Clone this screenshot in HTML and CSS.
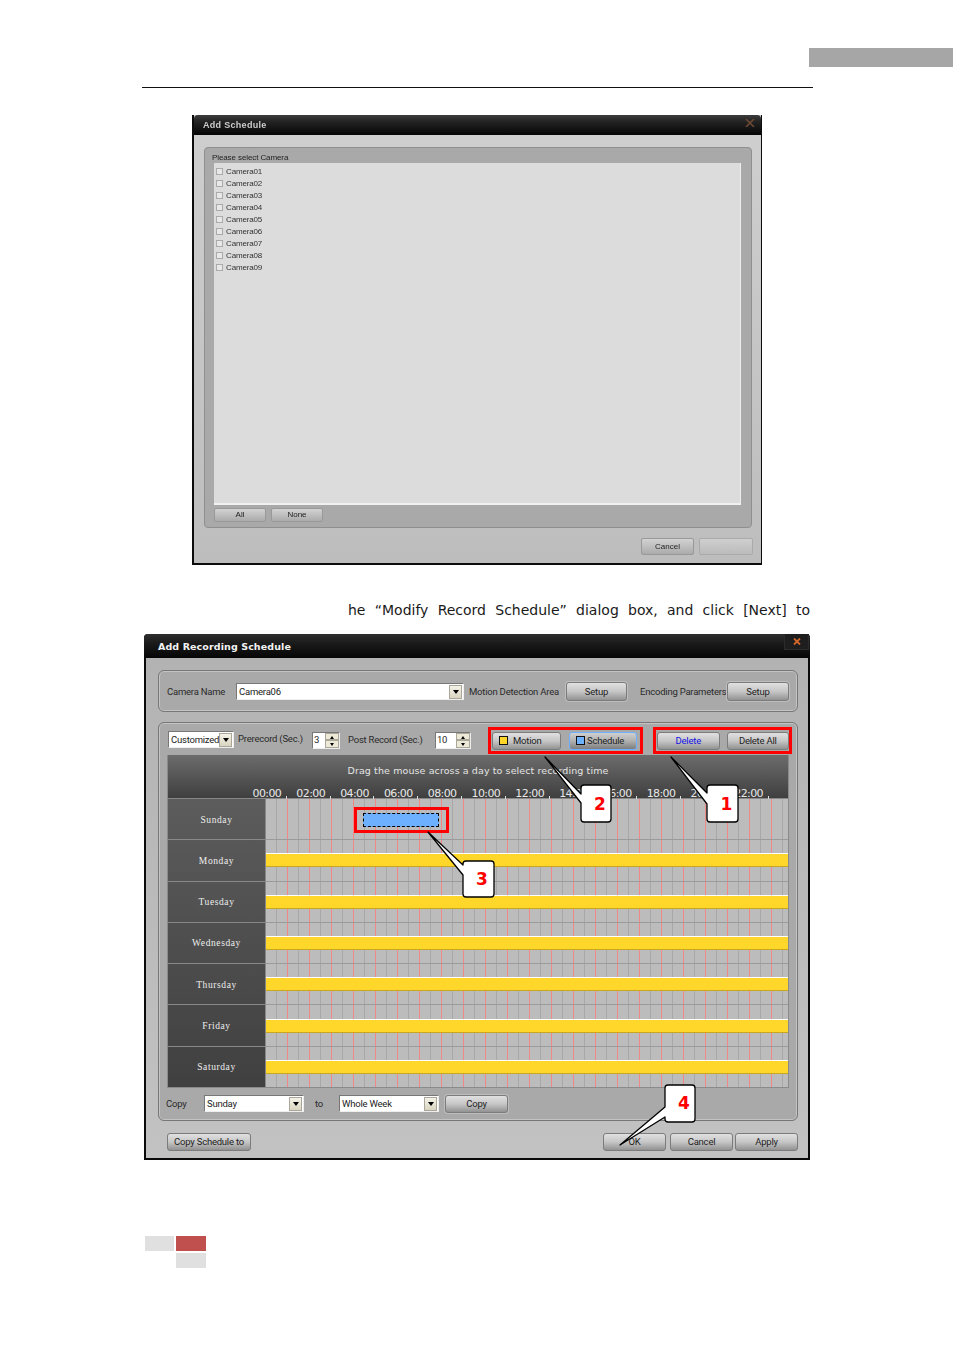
FILE: index.html
```html
<!DOCTYPE html>
<html lang="en">
<head>
<meta charset="utf-8">
<title>Add Recording Schedule</title>
<link rel="stylesheet" href="styles.css">
</head>
<body>
<div class="page">
  <div class="tab-bar"></div>
  <div class="rule"></div>

  <section class="fig1">
    <div class="fig1-title"><span>Add Schedule</span><svg class="fig1-x" viewBox="0 0 10 8"><path d="M1 0L9 8M9 0L1 8"/></svg></div>
    <div class="fig1-panel">
      <div class="fig1-legend">Please select Camera</div>
      <div class="fig1-list">
        <div class="cam"><i></i>Camera01</div>
        <div class="cam"><i></i>Camera02</div>
        <div class="cam"><i></i>Camera03</div>
        <div class="cam"><i></i>Camera04</div>
        <div class="cam"><i></i>Camera05</div>
        <div class="cam"><i></i>Camera06</div>
        <div class="cam"><i></i>Camera07</div>
        <div class="cam"><i></i>Camera08</div>
        <div class="cam"><i></i>Camera09</div>
      </div>
      <div class="fig1-btns"><div class="fbtn">All</div><div class="fbtn">None</div></div>
    </div>
    <div class="fig1-foot"><div class="fbtn wide">Cancel</div><div class="fbtn wide off">OK</div></div>
  </section>

  <p class="line">he “Modify Record Schedule” dialog box, and click [Next] to</p>

  <section class="dlg">
    <div class="dlg-title"><span>Add Recording Schedule</span><div class="close"><svg viewBox="0 0 8 7"><path d="M1 0.5L7 6.5M7 0.5L1 6.5"/></svg></div></div>

    <div class="group g1">
      <span class="lbl w-cam">Camera Name</span>
      <div class="combo c-cam"><span>Camera06</span><b class="arrow"></b></div>
      <span class="lbl w-motion">Motion Detection Area</span>
      <div class="btn b-setup1">Setup</div>
      <span class="lbl w-enc">Encoding Parameters</span>
      <div class="btn b-setup2">Setup</div>
    </div>

    <div class="group g2">
      <div class="toolbar">
        <div class="combo c-mode"><span>Customized</span><b class="arrow"></b></div>
        <span class="lbl w-pre">Prerecord (Sec.)</span>
        <div class="spin s-pre"><span>3</span><div class="spin-btns"><b class="up"></b><b class="down"></b></div></div>
        <span class="lbl w-post">Post Record (Sec.)</span>
        <div class="spin s-post"><span>10</span><div class="spin-btns"><b class="up"></b><b class="down"></b></div></div>
        <div class="redbox r-type">
          <div class="btn b-type"><i class="sw yellow"></i>Motion</div>
          <div class="btn b-type active"><i class="sw blue"></i>Schedule</div>
        </div>
        <div class="redbox r-del">
          <div class="btn b-del link">Delete</div>
          <div class="btn b-del">Delete All</div>
        </div>
      </div>

      <div class="sched">
        <div class="sched-head">
          <div class="hint">Drag the mouse across a day to select recording time</div>
          <div class="times">
            <span>00:00</span><span>02:00</span><span>04:00</span><span>06:00</span><span>08:00</span><span>10:00</span><span>12:00</span><span>14:00</span><span>16:00</span><span>18:00</span><span>20:00</span><span>22:00</span>
          </div>
        </div>
        <div class="sched-body">
          <div class="days">
            <div class="day">Sunday</div>
            <div class="day">Monday</div>
            <div class="day">Tuesday</div>
            <div class="day">Wednesday</div>
            <div class="day">Thursday</div>
            <div class="day">Friday</div>
            <div class="day">Saturday</div>
          </div>
          <div class="cells">
            <div class="gridlines">
              <i></i><i></i><i></i><i></i><i></i><i></i><i></i><i></i><i></i><i></i><i></i><i></i>
              <i></i><i></i><i></i><i></i><i></i><i></i><i></i><i></i><i></i><i></i><i></i><i></i>
              <i></i><i></i><i></i><i></i><i></i><i></i><i></i><i></i><i></i><i></i><i></i><i></i>
              <i></i><i></i><i></i><i></i><i></i><i></i><i></i><i></i><i></i><i></i><i></i><i></i>
            </div>
            <div class="row"><div class="sel"></div></div>
            <div class="row"><div class="bar"></div></div>
            <div class="row"><div class="bar"></div></div>
            <div class="row"><div class="bar"></div></div>
            <div class="row"><div class="bar"></div></div>
            <div class="row"><div class="bar"></div></div>
            <div class="row"><div class="bar"></div></div>
          </div>
        </div>
      </div>

      <div class="copyrow">
        <span class="lbl w-copy">Copy</span>
        <div class="combo c-day"><span>Sunday</span><b class="arrow"></b></div>
        <span class="lbl w-to">to</span>
        <div class="combo c-week"><span>Whole Week</span><b class="arrow"></b></div>
        <div class="btn b-copy">Copy</div>
      </div>
    </div>

    <div class="dlg-foot">
      <div class="btn b-sched">Copy Schedule to</div>
      <div class="btn b-ok">OK</div>
      <div class="btn b-cancel">Cancel</div>
      <div class="btn b-apply">Apply</div>
    </div>
  </section>

  <div class="pager">
    <div class="pg light"></div><div class="pg red"></div>
    <div class="pg none"></div><div class="pg light"></div>
  </div>

  <svg class="callouts" viewBox="0 0 954 1350" xmlns="http://www.w3.org/2000/svg">
    <rect class="mark" x="355.5" y="808.5" width="92" height="23"/>
    <path class="co" d="M671 757L707 793V788Q707 785 710 785H735Q738 785 738 788V819Q738 822 735 822H710Q707 822 707 819V804Z"/>
    <text class="num" x="726.5" y="810">1</text>
    <path class="co" d="M545 757L581 794V788Q581 785 584 785H608Q611 785 611 788V819Q611 822 608 822H584Q581 822 581 819V803Z"/>
    <text class="num" x="600" y="810">2</text>
    <path class="co" d="M428 832L463 865V864Q463 861 466 861H491Q494 861 494 864V894Q494 897 491 897H466Q463 897 463 894V875Z"/>
    <text class="num" x="482" y="885">3</text>
    <path class="co" d="M620 1145L665 1107V1088Q665 1085 668 1085H692Q695 1085 695 1088V1119Q695 1122 692 1122H668Q665 1122 665 1119V1117Z"/>
    <text class="num" x="684" y="1109">4</text>
  </svg>
</div>
</body>
</html>
```
FILE: styles.css
```css
* { box-sizing: border-box; }
html, body { margin: 0; padding: 0; background: #fff; }
.page { position: relative; width: 954px; height: 1350px; overflow: hidden; background: #fff; font-family: "DejaVu Sans", sans-serif; }
.tab-bar { height: 19px; margin: 48px 1px 0 809px; background: #a6a6a6; }
.rule { height: 1px; margin: 20px 141px 0 142px; background: #111; }

/* first, blurred screenshot */
.fig1 { width: 570px; height: 450px; margin: 27px 0 0 192px; background: linear-gradient(#cfcfcf, #bdbdbd); border: solid #0c0c0c; border-width: 0 1px 2px 2px; filter: blur(.7px); display: flex; flex-direction: column; font-family: "Liberation Sans", sans-serif; color: #333; }
.fig1-title { height: 20px; flex: none; background: linear-gradient(#3c3c3c, #222 35%, #050505); color: #ccc; font-size: 9px; font-weight: bold; letter-spacing: .3px; padding: 5px 0 0 9px; border-radius: 4px 4px 0 0; display: flex; justify-content: space-between; }
.fig1-x { width: 10px; height: 8px; margin: -1px 6px 0 0; fill: none; stroke: #6e4a34; stroke-width: 1.6; }
.fig1-panel { height: 381px; margin: 12px 9px 0 10px; background: #a9a9a9; border: 1px solid #8f8f8f; border-radius: 4px; padding: 3px 10px 0 9px; display: flex; flex-direction: column; flex: none; }
.fig1-legend { height: 12px; font-size: 8px; letter-spacing: -.1px; line-height: 13px; color: #222; flex: none; margin-left: -2px; }
.fig1-list { height: 342px; flex: none; background: #dcdcdc; border-bottom: 2px solid #f1f1f1; border-right: 1px solid #eee; padding-top: 2px; }
.cam { display: flex; align-items: center; height: 12.1px; font-size: 8px; letter-spacing: -.15px; color: #333; padding-left: 2px; }
.cam i { width: 7px; height: 7px; margin-right: 3px; background: #e8e8e8; border: 1px solid #aaa; }
.fig1-btns { display: flex; gap: 5px; margin-top: 3px; }
.fbtn { width: 52px; height: 14px; background: linear-gradient(#d2d2d2, #ababab); border: 1px solid #999; border-radius: 2px; text-align: center; font-size: 8px; line-height: 12px; color: #222; }
.fig1-foot { display: flex; justify-content: flex-end; gap: 5px; margin: 10px 8px 0 0; }
.fbtn.wide { width: 53px; height: 17px; line-height: 15px; }
.fbtn.off { width: 54px; color: #c4c4c4; background: linear-gradient(#cfcfcf, #bbb); border-color: #aaa; }

/* paragraph line */
.line { margin: 35px 0 0 348px; width: 462px; height: 20px; font-size: 14px; line-height: 20px; color: #1a1a1a; text-align: justify; text-align-last: justify; white-space: nowrap; }

/* second dialog */
.dlg { width: 666px; height: 526px; margin: 14px 0 0 144px; border: 2px solid #0a0a0a; border-top-width: 0; border-radius: 4px 4px 0 0; background: linear-gradient(#b2b2b2, #c2c2c2); font-family: Roboto, sans-serif; display: flex; flex-direction: column; color: #2a2a2a; font-size: 9.5px; letter-spacing: -.22px; }
.dlg-title { height: 24px; flex: none; margin: 0 -2px; background: linear-gradient(#2f2f2f, #1c1c1c 35%, #050505); color: #f2f2f2; border-radius: 4px 4px 0 0; font-family: "DejaVu Sans", sans-serif; font-weight: bold; font-size: 9.5px; letter-spacing: .1px; padding: 7px 0 0 14px; display: flex; justify-content: space-between; }
.close { width: 25px; height: 16px; margin: -7px 1px 0 0; background: #1e1e1e; border: 1px solid #2b2b2b; border-top: 0; display: flex; align-items: center; justify-content: center; }
.close svg { width: 8px; height: 7px; fill: none; stroke: #d4662a; stroke-width: 1.8; }

.group { margin-left: 12px; width: 640px; flex: none; background: #a9a9a9; border: 1px solid #777; border-radius: 6px; box-shadow: inset 0 0 0 1px #c4c4c4; }
.g1 { height: 42px; margin-top: 12px; display: flex; align-items: center; padding: 1px 0 0 8px; }
.g2 { height: 399px; margin-top: 10px; padding: 4px 0 0 8px; }

.lbl { white-space: nowrap; color: #2a2a2a; }
.w-cam { width: 69px; }
.w-motion { margin-left: 5px; width: 97px; }
.w-enc { margin-left: 13px; width: 87px; }
.w-pre { margin-left: 4px; width: 68px; padding-bottom: 4px; }
.w-post { margin-left: 8px; width: 76px; padding-bottom: 2px; }
.w-copy { width: 38px; margin-left: -1px; }
.w-to { margin-left: 11px; width: 24px; }

.combo { height: 17px; background: #fff; border: 1px solid #eee; border-left-color: #777; border-top-color: #777; display: flex; align-items: center; justify-content: space-between; padding-left: 2px; color: #222; }
.combo.c-cam { width: 228px; }
.combo.c-mode { width: 66px; margin-bottom: 2px; }
.combo.c-day { width: 100px; }
.combo.c-week { width: 100px; }
.arrow { width: 13px; height: 14px; margin-right: 1px; background: #ece9d8 linear-gradient(#f4f2e8, #d9d5c1); border: 1px solid #aaa79a; position: relative; }
.arrow::after { content: ""; position: absolute; left: 3px; top: 4px; border: 3px solid transparent; border-top: 4px solid #000; border-bottom: 0; }

.btn { height: 19px; display: flex; align-items: center; justify-content: center; white-space: nowrap; color: #222; background: linear-gradient(#e0e0e0, #c6c6c6 50%, #929292); border: 1px solid #7c7c7c; border-radius: 3px; box-shadow: 0 0 0 1px #bdbdbd; }
.b-setup1 { width: 61px; }
.b-setup2 { width: 62px; }

.toolbar { display: flex; align-items: center; height: 27px; padding-left: 1px; }
.spin { height: 17px; background: #fff; border: 1px solid #eee; border-left-color: #777; border-top-color: #777; display: flex; justify-content: space-between; padding-left: 1px; line-height: 14px; margin-bottom: 1px; }
.s-pre { width: 28px; margin-left: 6px; }
.s-post { width: 36px; margin-left: 11px; }
.spin-btns { width: 14px; display: flex; flex-direction: column; }
.spin-btns b { flex: 1; background: #ece9d8; border: 1px solid #aaa79a; position: relative; }
.spin-btns .up::after, .spin-btns .down::after { content: ""; position: absolute; left: 4px; top: 2px; border: 2px solid transparent; }
.spin-btns .up::after { border-bottom: 3px solid #000; border-top: 0; }
.spin-btns .down::after { border-top: 3px solid #000; border-bottom: 0; }

.redbox { height: 27px; border: 3px solid #f00; display: flex; align-items: center; background: #a9a9a9; padding-left: 1px; }
.r-type { width: 155px; margin-left: 17px; gap: 8px; }
.r-del { width: 139px; margin-left: 10px; gap: 7px; }
.b-type { width: 69px; height: 18px; box-shadow: none; gap: 5px; justify-content: flex-start; padding-left: 6px; }
.b-type.active { border-color: #6cb0ff; width: 68px; gap: 2px; background: linear-gradient(#cfcfcf, #b0b0b0 50%, #7d7d7d); }
.b-del { width: 63px; height: 18px; box-shadow: none; }
.link { color: #1212e0; }
.sw { width: 9px; height: 9px; border: 1px solid #111; }
.sw.yellow { background: #ffd72a; }
.sw.blue { background: #6cb0ff; }

.sched { width: 622px; height: 333px; margin: 1px 0 0 0; background: #444; border: 1px solid #8a8a8a; border-top: 0; display: flex; flex-direction: column; font-family: "DejaVu Sans", sans-serif; letter-spacing: 0; }
.sched-head { height: 44px; flex: none; background: linear-gradient(#6c6c6c, #3f3f3f); color: #e8e8e8; border-bottom: 1px solid #888; }
.hint { text-align: center; font-size: 9.5px; letter-spacing: .1px; padding-top: 9px; line-height: 14px; height: 26px; color: #e4e4e4; }
.times { display: flex; padding: 7px 0 0 77px; font-size: 11px; line-height: 12px; height: 18px; color: #e8e8e8; }
.times span { position: relative; width: 43.8px; height: 11px; text-align: center; letter-spacing: -.6px; flex: none; }
.times span::after { content: ""; position: absolute; right: 2px; bottom: 0; width: 1px; height: 3px; background: #ddd; }
.sched-body { flex: 1; display: flex; min-height: 0; }
.days { width: 98px; flex: none; background: linear-gradient(#5c5c5c, #404040); border-right: 1px solid #888; display: flex; flex-direction: column; }
.day { flex: 1; display: flex; align-items: center; justify-content: center; padding-top: 1px; color: #eee; font-family: "Liberation Serif", serif; font-size: 9.5px; letter-spacing: .6px; border-bottom: 1px solid #888; }
.day:last-child { border-bottom: 0; }
.cells { flex: 1; position: relative; overflow: hidden; display: flex; flex-direction: column; background: #bcbcbc; }
.gridlines { position: absolute; inset: 0; display: flex; }
.gridlines i { flex: none; width: 11px; border-right: 1px solid #a8a8a8; }
.gridlines i:nth-child(even) { border-right: 1px solid #f08888; }
.row { flex: 1; position: relative; border-bottom: 1px solid #9a9a9a; display: flex; align-items: center; }
.row:last-child { border-bottom: 0; }
.bar { width: 100%; height: 14px; background: #ffd72a; border-top: 1px solid #fff; border-bottom: 1px solid #c9a820; }
.sel { position: absolute; left: 97px; top: 14px; width: 76px; height: 14px; background: #6cb0ff; border: 1px dashed #000; }

.copyrow { display: flex; align-items: center; height: 19px; margin-top: 6px; }
.b-copy { width: 63px; margin-left: 6px; height: 18px; }

.dlg-foot { display: flex; align-items: center; padding: 11px 0 0 21px; height: 30px; }
.dlg-foot .btn { height: 18px; box-shadow: none; }
.b-sched { width: 84px; }
.b-ok { width: 63px; margin-left: 352px; }
.b-cancel { width: 63px; margin-left: 4px; }
.b-apply { width: 63px; margin-left: 2px; }

.pager { display: grid; grid-template-columns: 29px 30px; grid-auto-rows: 15px; column-gap: 2px; row-gap: 2px; margin: 76px 0 0 145px; }
.pg.light { background: #e0e0e0; }
.pg.red { background: #c0504d; }

.callouts { position: absolute; left: 0; top: 0; width: 954px; height: 1350px; pointer-events: none; }
.mark { fill: none; stroke: #f00; stroke-width: 3; }
.co { fill: #fff; stroke: #000; stroke-width: 1.3; stroke-linejoin: round; }
.num { fill: #f00; font-family: "DejaVu Sans", sans-serif; font-weight: bold; font-size: 17px; text-anchor: middle; }
```
